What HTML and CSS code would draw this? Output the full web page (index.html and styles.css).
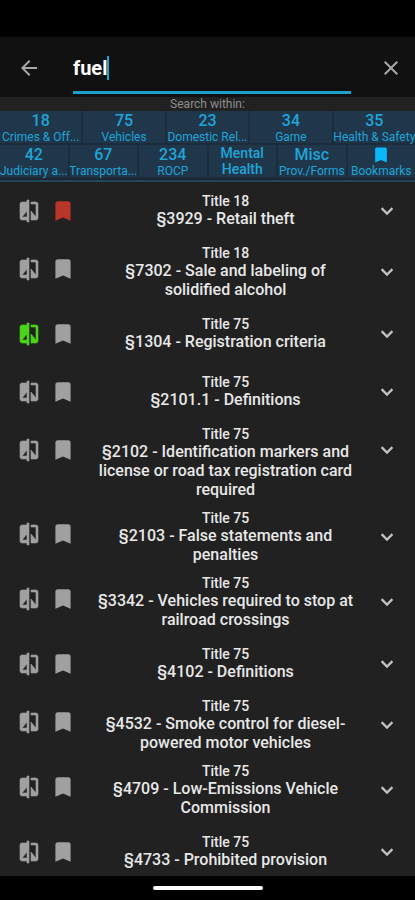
FILE: index.html
```
<!DOCTYPE html>
<html lang="en">
<head>
<meta charset="utf-8">
<meta name="viewport" content="width=device-width, initial-scale=1">
<title>Search</title>
<link rel="stylesheet" href="styles.css">
</head>
<body>
<svg class="sprite" aria-hidden="true">
  <symbol id="compare" viewBox="0 0 24 24"><path stroke="currentColor" stroke-width=".6" d="M10 3H5c-1.100 0-2 .9-2 2v14c0 1.100.9 2 2 2h5v2h2V1h-2v2zm0 15H5l5-6v6zm9-15h-5v2h5v13l-5-6v9h5c1.100 0 2-.9 2-2V5c0-1.100-.9-2-2-2z"/></symbol>
  <symbol id="bookmark" viewBox="0 0 24 24"><path d="M17 3H7c-1.100 0-2 .9-2 2v16l7-3 7 3V5c0-1.100-.9-2-2-2z"/></symbol>
  <symbol id="chevron" viewBox="0 0 24 24"><path stroke="currentColor" stroke-width=".4" d="M16.590 8.590 12 13.170 7.410 8.590 6 10l6 6 6-6z"/></symbol>
</svg>
<header class="search-bar">
  <button class="icon-button" aria-label="Back"><svg class="icon" viewBox="0 0 24 24"><path d="M20 11H7.830l5.590-5.590L12 4l-8 8 8 8 1.410-1.410L7.830 13H20z"/></svg></button>
  <div class="field">
    <input class="query" type="text" value="fuel" aria-label="Search">
    <span class="caret"></span>
  </div>
  <button class="icon-button" aria-label="Clear"><svg class="icon" viewBox="0 0 24 24"><path d="M19 6.410 17.590 5 12 10.590 6.410 5 5 6.410 10.590 12 5 17.590 6.410 19 12 13.410 17.590 19 19 17.590 13.410 12z"/></svg></button>
</header>
<nav class="filters">
  <p class="filters-title">Search within:</p>
  <div class="filter-row">
    <button class="filter"><span class="count">18</span><span class="label">Crimes &amp; Off...</span></button>
    <button class="filter"><span class="count">75</span><span class="label">Vehicles</span></button>
    <button class="filter"><span class="count">23</span><span class="label">Domestic Rel...</span></button>
    <button class="filter"><span class="count">34</span><span class="label">Game</span></button>
    <button class="filter"><span class="count">35</span><span class="label">Health &amp; Safety</span></button>
  </div>
  <div class="filter-row">
    <button class="filter"><span class="count">42</span><span class="label">Judiciary a...</span></button>
    <button class="filter"><span class="count">67</span><span class="label">Transporta...</span></button>
    <button class="filter"><span class="count">234</span><span class="label">ROCP</span></button>
    <button class="filter words"><span>Mental</span><span>Health</span></button>
    <button class="filter"><span class="count">Misc</span><span class="label">Prov./Forms</span></button>
    <button class="filter"><svg class="filter-icon"><use href="#bookmark"/></svg><span class="label">Bookmarks</span></button>
  </div>
</nav>
<main class="results" id="results"></main>
<footer class="system-bar"><span class="handle"></span></footer>
<script src="app.js"></script>
</body>
</html>
```
FILE: styles.css
```
* { box-sizing: border-box; }

body {
  margin: 0;
  height: 100vh;
  padding-top: 37px;
  display: flex;
  flex-direction: column;
  overflow: hidden;
  background: #000;
  color: #e8e8e8;
  font-family: Roboto, sans-serif;
}

button {
  margin: 0;
  padding: 0;
  border: 0;
  background: none;
  color: inherit;
  font: inherit;
}

svg { display: block; fill: currentColor; }
.sprite { position: absolute; width: 0; height: 0; }

.search-bar {
  height: 60px;
  flex: none;
  display: flex;
  align-items: center;
  gap: 20px;
  padding: 2px 12px 0 17px;
  background: #111;
}
.icon-button { color: #a8a8a8; }
.icon { width: 24px; height: 24px; }
.search-bar .icon-button { padding: 0 12px 0 0; }
.search-bar .icon-button:last-child { padding: 0 0 0 8px; }
.field {
  position: relative;
  flex: 1;
  height: 52px;
  border-bottom: 3px solid #1b9fc9;
}
.query {
  width: 100%;
  height: 52px;
  padding: 0;
  border: 0;
  outline: 0;
  background: none;
  color: #fff;
  font: 700 20px/24px Roboto, sans-serif;
}
.caret {
  position: absolute;
  left: 34px;
  top: 14px;
  width: 2px;
  height: 24px;
  background: #1ba6d2;
}

.filters {
  flex: none;
  padding-bottom: 1px;
  border-bottom: 2px solid #21485f;
  background: #212121;
  color: #1fa5d8;
}
.filters-title {
  margin: 0;
  color: #8f8f8f;
  font-size: 12px;
  line-height: 14px;
  text-align: center;
}
.filter-row {
  display: flex;
  gap: 2px;
  padding-bottom: 2px;
  background: #1c2c3a;
}
.filter {
  flex: 1 1 0;
  min-width: 0;
  height: 32px;
  display: flex;
  flex-direction: column;
  align-items: center;
  background: #20364a;
  white-space: nowrap;
}
.count { font-size: 16px; font-weight: 500; line-height: 20px; }
.label { font-size: 12px; line-height: 12px; }
.words { font-size: 14px; font-weight: 500; line-height: 16px; }
.filter-icon { width: 20px; height: 20px; color: #08b8f8; }

.results {
  flex: 1;
  min-height: 0;
  overflow: hidden;
  background: #212121;
}
.result {
  min-height: 58px;
  display: flex;
  align-items: center;
  padding: 5px 16px 6px 17px;
}
.actions {
  align-self: flex-start;
  display: flex;
  align-items: center;
  gap: 9px;
  padding-top: 11px;
}
.actions .icon-button { color: #a0a0a0; }
.actions .saved { color: #b8352a; }
.actions .compared { color: #4cd31b; }
.mark { width: 26px; height: 26px; }
.text {
  flex: 1;
  padding: 0 19px;
  text-align: center;
}
.code { margin: 0; font-size: 14px; font-weight: 500; line-height: 16px; }
.name { margin: 0; font-size: 16px; font-weight: 500; line-height: 19px; }
.expand { color: #c4c4c4; }
.tall .expand { align-self: flex-start; padding-top: 12px; }

.system-bar {
  flex: none;
  height: 24px;
  display: flex;
  align-items: center;
  justify-content: center;
}
.handle {
  width: 110px;
  height: 4px;
  border-radius: 2px;
  background: #fff;
}
```
FILE: app.js
```
const results = [
  { code: "Title 18", name: "§3929 - Retail theft", saved: true },
  { code: "Title 18", name: "§7302 - Sale and labeling of solidified alcohol" },
  { code: "Title 75", name: "§1304 - Registration criteria", compared: true },
  { code: "Title 75", name: "§2101.1 - Definitions" },
  { code: "Title 75", name: "§2102 - Identification markers and license or road tax registration card required", tall: true },
  { code: "Title 75", name: "§2103 - False statements and penalties" },
  { code: "Title 75", name: "§3342 - Vehicles required to stop at railroad crossings" },
  { code: "Title 75", name: "§4102 - Definitions" },
  { code: "Title 75", name: "§4532 - Smoke control for diesel-powered motor vehicles" },
  { code: "Title 75", name: "§4709 - Low-Emissions Vehicle Commission" },
  { code: "Title 75", name: "§4733 - Prohibited provision" }
];

document.getElementById("results").innerHTML = results.map(r => `
  <article class="result ${r.tall ? "tall" : ""}">
    <div class="actions">
      <button class="icon-button ${r.compared ? "compared" : ""}" aria-label="Compare"><svg class="icon"><use href="#compare"/></svg></button>
      <button class="icon-button ${r.saved ? "saved" : ""}" aria-label="Bookmark"><svg class="mark"><use href="#bookmark"/></svg></button>
    </div>
    <div class="text">
      <h2 class="code">${r.code}</h2>
      <p class="name">${r.name}</p>
    </div>
    <button class="icon-button expand" aria-label="Expand"><svg class="icon"><use href="#chevron"/></svg></button>
  </article>`).join("");
```
